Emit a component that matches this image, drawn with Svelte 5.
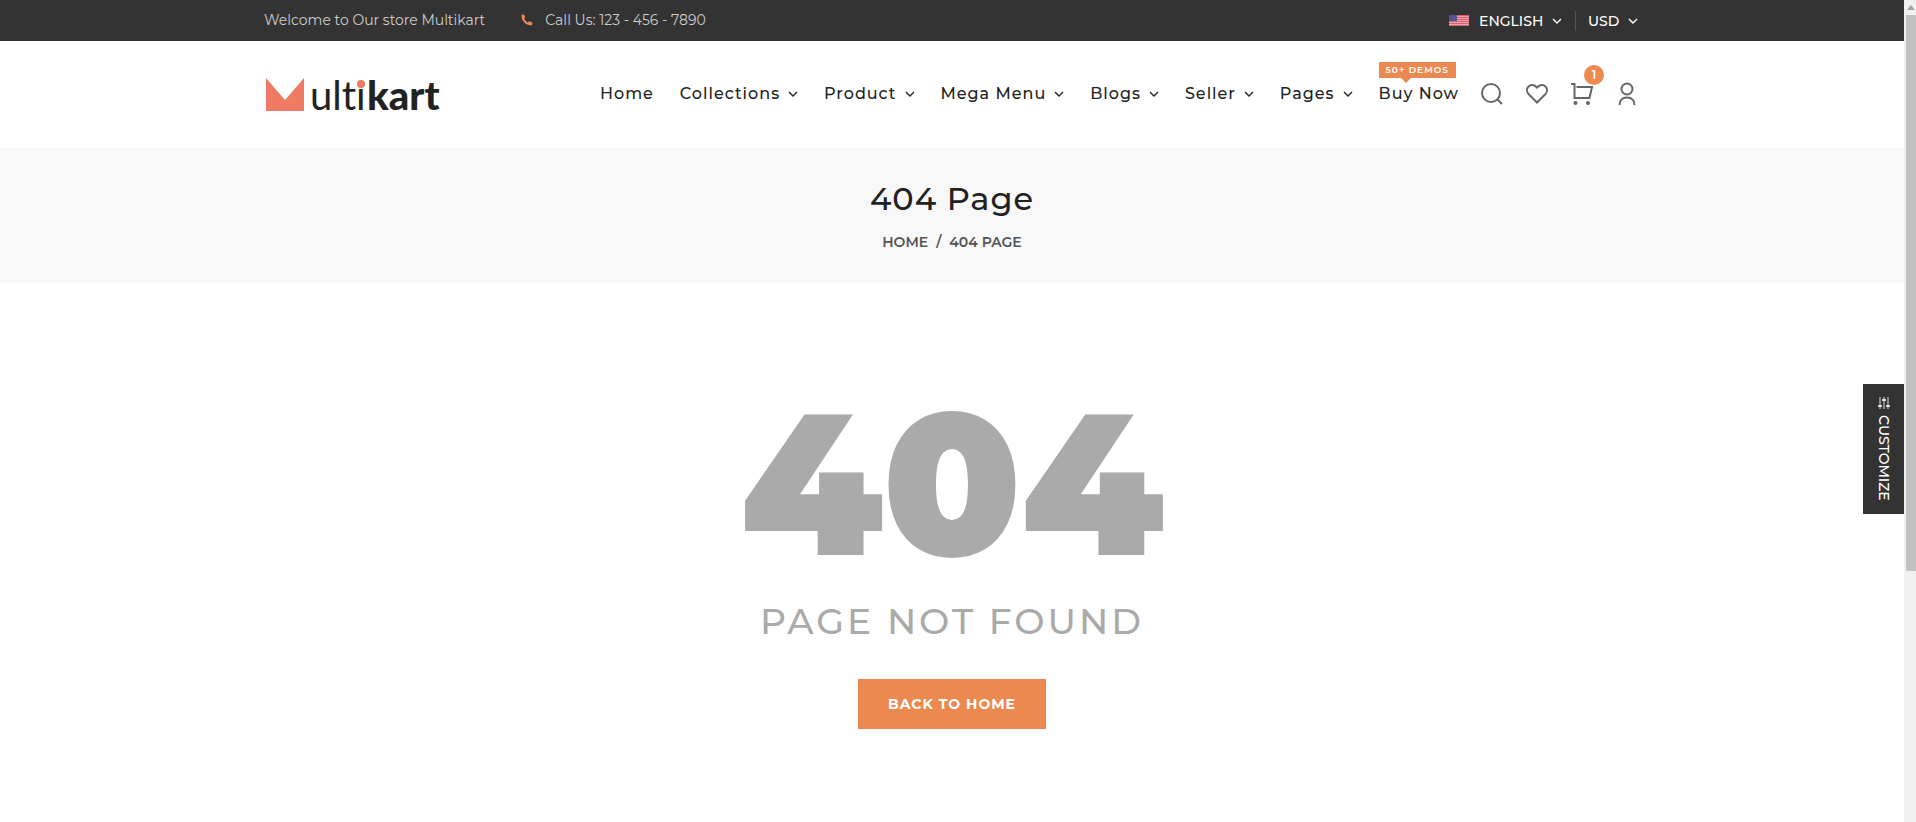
<script lang="ts">
  const navItems = [
    { label: 'Home', menu: false },
    { label: 'Collections', menu: true },
    { label: 'Product', menu: true },
    { label: 'Mega Menu', menu: true },
    { label: 'Blogs', menu: true },
    { label: 'Seller', menu: true },
    { label: 'Pages', menu: true },
    { label: 'Buy Now', menu: false, badge: '50+ demos' },
  ];

  let cartCount = 1;
  let language = 'ENGLISH';
  let currency = 'USD';
</script>

{#snippet chevron()}
  <svg viewBox="0 0 10 10" width="10" height="10" aria-hidden="true">
    <path d="m1 3 4 4 4-4" fill="none" stroke="currentColor" stroke-width="1.4" />
  </svg>
{/snippet}

<div class="page">
  <div class="topbar">
    <div class="container topbar-row">
      <div class="contact">
        <span>Welcome to Our store Multikart</span>
        <span class="call">
          <svg viewBox="0 0 12 12" width="12" height="12" aria-hidden="true">
            <path
              fill="#ec8951"
              d="M.6 1.3 1.2.5 3 .4l1.3 2.8-1.2 1.3c.7 1.8 2 3.1 3.7 4l1.4-1.3 3.1 1.2v2l-.8.9C5.5 12 .1 7 .6 1.3z"
            />
          </svg>
          Call Us: 123 - 456 - 7890
        </span>
      </div>
      <div class="settings">
        <label class="picker">
          <svg class="flag" viewBox="0 0 20 11" width="20" height="11" aria-hidden="true">
            <rect width="20" height="11" fill="#d9606f" />
            <path
              d="M0 1.5h20M0 3.5h20M0 5.5h20M0 7.5h20M0 9.5h20"
              stroke="#efb4bc"
              stroke-width=".8"
            />
            <rect width="8" height="6" fill="#53548c" />
          </svg>
          <select bind:value={language} aria-label="Language">
            <option>ENGLISH</option>
          </select>
          {@render chevron()}
        </label>
        <label class="picker currency">
          <select bind:value={currency} aria-label="Currency">
            <option>USD</option>
          </select>
          {@render chevron()}
        </label>
      </div>
    </div>
  </div>

  <header>
    <div class="container header-row">
      <a class="logo" href="#home" aria-label="Multikart">
        <svg viewBox="0 0 180 56" width="180" height="56">
          <defs>
            <!-- keeps the dot of the i in the brand colour, the stem dark -->
            <linearGradient id="dotted-i" gradientUnits="userSpaceOnUse" x1="0" y1="0" x2="0" y2="56">
              <stop offset=".38" stop-color="#f07b65" />
              <stop offset=".38" stop-color="#222" />
            </linearGradient>
          </defs>
          <path d="M2 12 21 34 40 12V45H2z" fill="#f07b65" />
          <text x="46" y="44" class="logo-light">ult<tspan fill="url(#dotted-i)">i</tspan></text>
          <text x="103" y="44" class="logo-bold">kart</text>
          <circle cx="97" cy="18" r="4" fill="#f07b65" />
        </svg>
      </a>
      <div class="header-right">
        <nav>
          {#each navItems as item}
            <a href="#menu">
              {item.label}
              {#if item.menu}{@render chevron()}{/if}
              {#if item.badge}<span class="demos">{item.badge}</span>{/if}
            </a>
          {/each}
        </nav>
        <div class="tools">
          <button aria-label="Search">
            <svg viewBox="0 0 24 24" width="24" height="24">
              <circle cx="11" cy="11" r="9" />
              <path d="m17 17 5 5" />
            </svg>
          </button>
          <button aria-label="Wishlist">
            <svg viewBox="0 0 24 24" width="24" height="24">
              <path
                d="M12 20.5 3.5 12C1.3 9.5 1.6 6.5 3.3 4.7c2.5-2.5 6-2.2 8.7.9 2.7-3.1 6.2-3.4 8.7-.9 1.7 1.8 2 4.8-.2 7.3z"
              />
            </svg>
          </button>
          <button aria-label="Cart">
            <svg viewBox="0 0 24 24" width="24" height="24">
              <path d="M1 2h3.500v14h15L22 5H6.500" />
              <circle class="wheel" cx="5.5" cy="21" r="2" />
              <circle class="wheel" cx="18" cy="21" r="2" />
            </svg>
            <span class="count">{cartCount}</span>
          </button>
          <button aria-label="Account">
            <svg viewBox="0 0 24 24" width="24" height="24">
              <circle cx="12" cy="7" r="5.5" />
              <path d="M4.5 23c0-4.5 3-7.5 7.5-7.5s7.5 3 7.5 7.5" />
            </svg>
          </button>
        </div>
      </div>
    </div>
  </header>

  <div class="breadcrumb">
    <h2>404 Page</h2>
    <ol>
      <li><a href="#home">HOME</a></li>
      <li aria-hidden="true">/</li>
      <li>404 PAGE</li>
    </ol>
  </div>

  <main>
    <h1>404</h1>
    <p>PAGE NOT FOUND</p>
    <a class="back" href="#home">BACK TO HOME</a>
  </main>
</div>

<button class="customize">
  <svg viewBox="0 0 12 12" width="12" height="12" aria-hidden="true">
    <path d="M2 0v12M6 0v12M10 0v12" stroke="#ddd" />
    <path d="M0 9h4M4 3h4M8 9h4" stroke="#fff" stroke-width="1.5" />
  </svg>
  CUSTOMIZE
</button>

<div class="scrollbar" aria-hidden="true">
  <span class="arrow"></span>
  <span class="thumb"></span>
</div>

<style>
  :global(body) {
    background: #fff;
    color: #222;
    font-family: Montserrat, Inter, sans-serif;
    font-size: 14px;
  }

  a {
    color: inherit;
    text-decoration: none;
  }

  button {
    padding: 0;
    border: none;
    background: none;
    font: inherit;
    cursor: pointer;
  }

  .page {
    margin-right: 12px;
  }

  .container {
    display: flex;
    align-items: center;
    justify-content: space-between;
    max-width: 1376px;
    margin: 0 auto;
  }

  .topbar {
    background: #333;
  }

  .topbar-row {
    height: 41px;
  }

  .contact,
  .call,
  .settings,
  .picker {
    display: flex;
    align-items: center;
  }

  .contact {
    gap: 36px;
    padding-bottom: 2px;
    color: #ccc;
  }

  .call {
    gap: 12px;
  }

  .settings {
    color: #fff;
  }

  .picker {
    gap: 8px;
    padding-right: 13px;
    font-weight: 500;
  }

  .flag {
    margin-right: 2px;
  }

  .picker.currency {
    border-left: 1px solid #555;
    padding: 0 2px 0 12px;
  }

  select {
    appearance: none;
    padding: 0;
    border: none;
    background: none;
    color: #fff;
    font: inherit;
    font-size: 14px;
    line-height: 20px;
  }

  header {
    background: #fff;
  }

  .header-row {
    height: 107px;
    padding-bottom: 2px;
    box-sizing: border-box;
  }

  .logo svg {
    display: block;
    fill: #222;
  }

  .logo-light,
  .logo-bold {
    font-family: Lato, sans-serif;
    font-size: 40px;
    font-variant-ligatures: none;
  }

  .logo-bold {
    font-weight: 900;
  }

  .header-right {
    display: flex;
    align-items: center;
    gap: 21px;
  }

  nav {
    display: flex;
    justify-content: space-between;
    width: 859px;
    font-size: 16px;
    font-weight: 500;
    letter-spacing: 1px;
  }

  nav a {
    display: flex;
    position: relative;
    align-items: center;
    gap: 8px;
    white-space: nowrap;
  }

  .demos {
    position: absolute;
    left: 0;
    bottom: 25px;
    padding: 0 7px;
    background: #ec8951;
    color: #fff;
    font-size: 9px;
    font-weight: 600;
    line-height: 16px;
    text-transform: uppercase;
  }

  .demos::after {
    content: '';
    position: absolute;
    top: 100%;
    left: 22px;
    border: 5px solid transparent;
    border-top-color: #ec8951;
    border-bottom: none;
  }

  .tools {
    display: flex;
    gap: 21px;
    padding-right: 1px;
  }

  .tools button {
    position: relative;
  }

  .tools svg {
    display: block;
    fill: none;
    stroke: #666;
    stroke-width: 2;
  }

  .tools .wheel {
    fill: #666;
    stroke: none;
  }

  .count {
    position: absolute;
    top: -17px;
    right: -10px;
    width: 20px;
    border-radius: 50%;
    background: #ec8951;
    color: #fff;
    font-size: 12px;
    font-weight: 600;
    line-height: 20px;
    text-align: center;
  }

  .breadcrumb {
    padding: 31px 0;
    background: #f8f8f8;
    text-align: center;
  }

  h2 {
    margin: 0 0 13px;
    font-size: 32px;
    font-weight: 500;
    letter-spacing: 1px;
    line-height: 40px;
  }

  ol {
    display: flex;
    justify-content: center;
    gap: 8px;
    margin: 0;
    padding: 0;
    color: #555;
    font-weight: 600;
    line-height: 20px;
    list-style: none;
  }

  main {
    padding: 100px 0 90px;
    color: #aaa;
    text-align: center;
  }

  h1 {
    margin: 0;
    font-size: 200px;
    font-weight: 900;
    line-height: 200px;
  }

  p {
    margin: 18px 0 38px;
    font-size: 36px;
    font-weight: 500;
    letter-spacing: 3px;
    line-height: 40px;
  }

  .back {
    display: inline-block;
    padding: 0 30px;
    background: #ec8951;
    color: #fff;
    font-size: 14px;
    font-weight: 700;
    letter-spacing: 1px;
    line-height: 50px;
  }

  .customize {
    display: flex;
    position: fixed;
    top: 384px;
    right: 12px;
    align-items: center;
    gap: 6px;
    padding: 13px 0;
    background: #333;
    color: #fff;
    font-weight: 500;
    line-height: 41px;
    writing-mode: vertical-rl;
  }

  .scrollbar {
    display: flex;
    position: fixed;
    top: 0;
    right: 0;
    bottom: 0;
    flex-direction: column;
    align-items: flex-end;
    gap: 5px;
    width: 12px;
    padding-top: 5px;
    box-sizing: border-box;
    background: #f0f0f0;
  }

  .arrow {
    margin-right: 1px;
    border: 4px solid transparent;
    border-top: none;
    border-bottom: 5px solid #a3a3a3;
  }

  .thumb {
    width: 10px;
    height: 68%;
    background: #c1c1c1;
  }
</style>
